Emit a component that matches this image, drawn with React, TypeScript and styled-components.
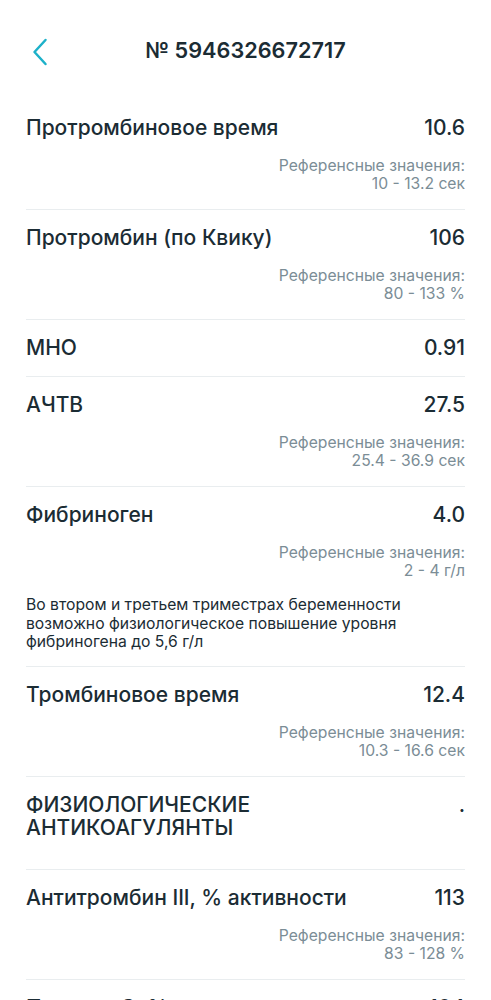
import styled, { createGlobalStyle } from "styled-components";

const GlobalStyle = createGlobalStyle`
  body {
    margin: 0;
    background: #ffffff;
    font-family: Inter, "Noto Sans", sans-serif;
    color: #1b2c34;
  }
`;

const Page = styled.div`
  width: 491px;
  height: 1000px;
  overflow: hidden;
  background: #ffffff;
`;

const Header = styled.div`
  height: 100px;
  display: flex;
  align-items: center;
  padding: 0 26px;
`;

const BackButton = styled.button`
  border: none;
  background: none;
  padding: 0;
  width: 24px;
  height: 30px;
  display: flex;
  align-items: center;
  justify-content: center;
  margin-left: 2px;
  margin-top: 3px;
`;

const HeaderTitle = styled.h1`
  flex: 1;
  margin: 0 0 0 -26px;
  text-align: center;
  font-size: 21.7px;
  font-weight: 600;
  color: #1b2c34;
`;

const List = styled.div`
  padding: 0 26px;
`;

const Row = styled.div<{ $last?: boolean; $section?: boolean }>`
  padding: 16px 0 ${(p) => (p.$section ? "30px" : "16px")};
  border-bottom: ${(p) => (p.$last ? "none" : "1.5px solid #e9edef")};
`;

const TopLine = styled.div`
  display: flex;
  justify-content: space-between;
  align-items: flex-start;
  gap: 16px;
`;

const Name = styled.div<{ $upper?: boolean }>`
  font-size: 21px;
  font-weight: 500;
  line-height: ${(p) => (p.$upper ? "23px" : "24px")};
  max-width: ${(p) => (p.$upper ? "270px" : "none")};
  color: #1b2c34;
`;

const Value = styled.div`
  font-size: 21px;
  font-weight: 500;
  line-height: 24px;
  color: #1b2c34;
  white-space: nowrap;
`;

const Ref = styled.div`
  margin-top: 17px;
  text-align: right;
  font-size: 15.7px;
  line-height: 18px;
  color: #7b8d96;
`;

const Note = styled.p`
  margin: 16px 0 -2px;
  font-size: 15.7px;
  line-height: 18.5px;
  color: #1b2c34;
  max-width: 390px;
`;

type Item = {
  name: string;
  value: string;
  ref?: string;
  note?: string;
  section?: boolean;
};

const items: Item[] = [
  { name: "Протромбиновое время", value: "10.6", ref: "10 - 13.2 сек" },
  { name: "Протромбин (по Квику)", value: "106", ref: "80 - 133 %" },
  { name: "МНО", value: "0.91" },
  { name: "АЧТВ", value: "27.5", ref: "25.4 - 36.9 сек" },
  {
    name: "Фибриноген",
    value: "4.0",
    ref: "2 - 4 г/л",
    note: "Во втором и третьем триместрах беременности возможно физиологическое повышение уровня фибриногена до 5,6 г/л",
  },
  { name: "Тромбиновое время", value: "12.4", ref: "10.3 - 16.6 сек" },
  { name: "ФИЗИОЛОГИЧЕСКИЕ АНТИКОАГУЛЯНТЫ", value: ".", section: true },
  { name: "Антитромбин III, % активности", value: "113", ref: "83 - 128 %" },
  { name: "Протеин С, % активности", value: "104", ref: "70 - 140 %" },
];

function App() {
  return (
    <Page>
      <GlobalStyle />
      <Header>
        <BackButton aria-label="Назад">
          <svg width="16" height="28" viewBox="0 0 16 28" fill="none">
            <path d="M13.5 2 L2.5 14 L13.5 26" stroke="#1db1c9" strokeWidth="2.5" strokeLinecap="round" strokeLinejoin="round" />
          </svg>
        </BackButton>
        <HeaderTitle>№ 5946326672717</HeaderTitle>
      </Header>
      <List>
        {items.map((it, i) => (
          <Row key={it.name} $section={it.section} $last={i === items.length - 1}>
            <TopLine>
              <Name $upper={it.section}>{it.name}</Name>
              <Value>{it.value}</Value>
            </TopLine>
            {it.ref && (
              <Ref>
                Референсные значения:
                <br />
                {it.ref}
              </Ref>
            )}
            {it.note && <Note>{it.note}</Note>}
          </Row>
        ))}
      </List>
    </Page>
  );
}

export default App;
